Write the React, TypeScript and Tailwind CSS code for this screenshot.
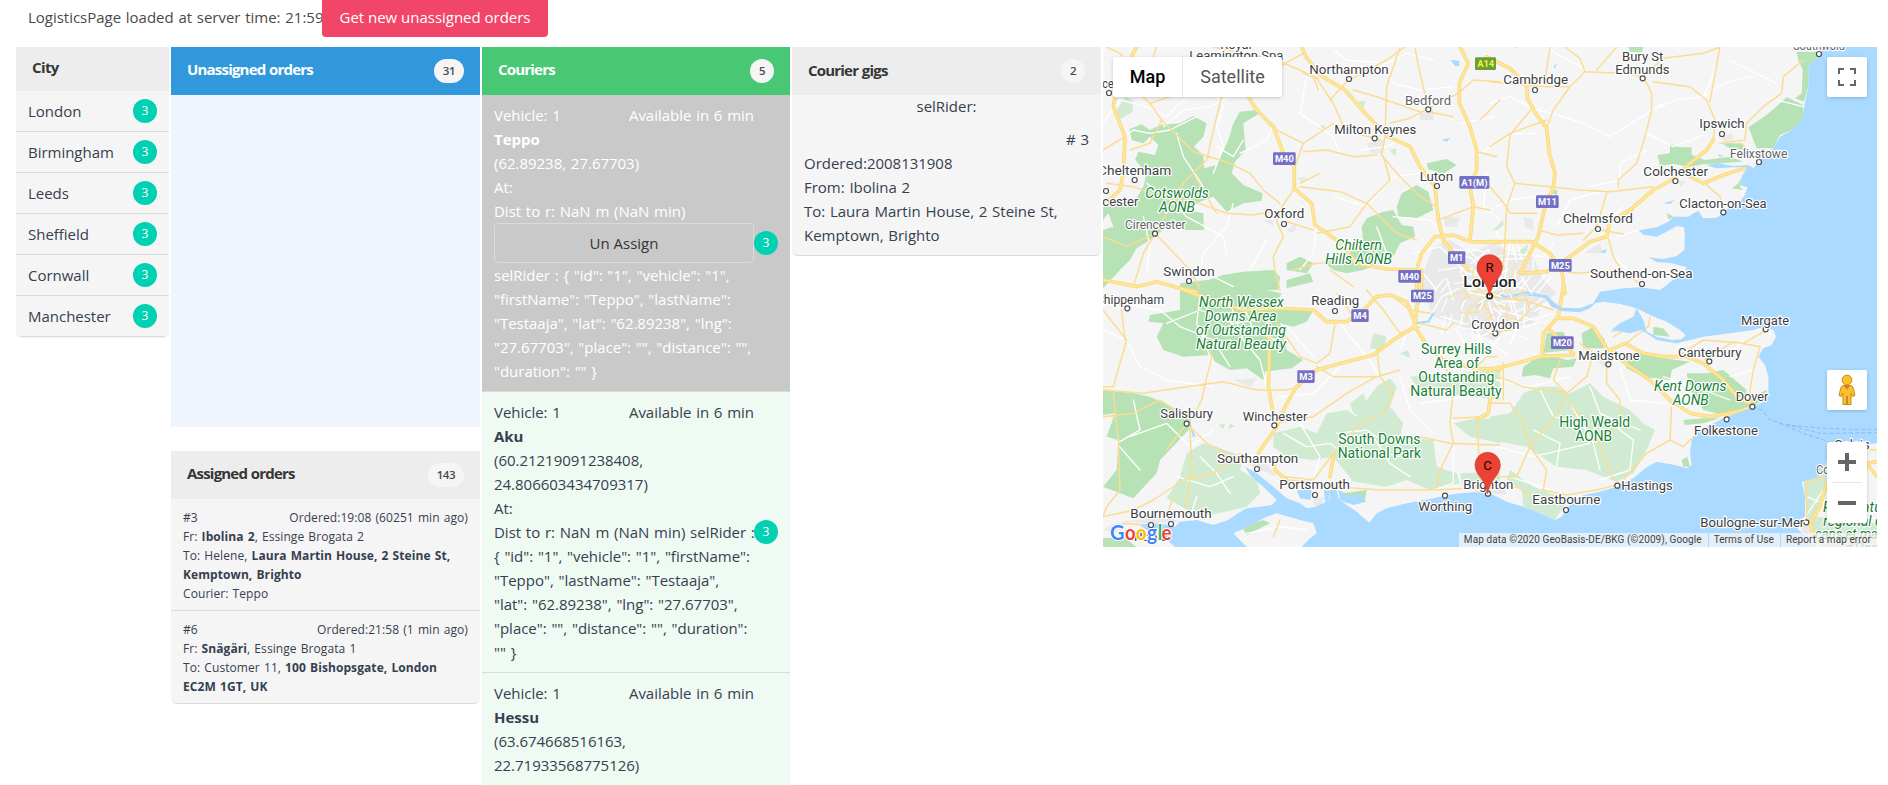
import type { ReactNode } from "react";

const sansClass = "font-['Open_Sans','Noto_Sans',sans-serif]";

/* ---------- Map data: four tiles, each path in its tile's own units ---------- */
type Tiles = [string, string, string, string];
const tileOffsets = ["translate(0 0)", "translate(1170 0)", "translate(0 750)", "translate(1170 750)"];

const darkGreen: Tiles = [
  "M280,228 L320,250 L310,290 L282,320 L310,345 L312,385 L350,375 L385,300 L400,250 L420,215 L470,210 L475,222 L430,250 L437,330 L405,365 L395,400 L430,435 L488,460 L485,482 L430,490 L380,515 L340,470 L300,485 L260,510 L310,520 L312,570 L235,570 L200,560 L150,600 L110,625 L90,660 L50,700 L9,740 L9,570 L40,560 L25,520 L9,540 L9,500 L100,490 L130,440 L140,400 L105,360 L115,335 L165,345 L175,315 L150,290 L130,310 L95,300 L88,268 L125,253 L150,270 L180,255 L240,250 Z M9,670 L60,640 L110,600 L60,690 L9,745 Z M980,370 L1040,357 L1070,375 L1030,402 L985,388 Z M925,450 L950,435 L985,455 L1000,510 L970,525 L950,535 L895,530 L890,500 L905,460 Z M850,515 L880,510 L905,555 L940,560 L945,590 L900,610 L880,650 L840,670 L790,690 L740,700 L700,690 L670,665 L735,655 L760,625 L790,610 L785,560 L800,535 Z M270,750 L310,725 L370,705 L430,695 L520,690 L540,710 L535,750 Z M560,670 L600,650 L640,670 L620,700 L560,690 Z M560,720 L630,700 L640,725 L560,745 Z",
  "M920,35 L985,35 L985,50 L960,75 L955,140 L942,185 L915,175 L935,160 L938,90 L925,60 Z M890,172 L940,195 L940,240 L905,270 L870,285 L850,325 L800,325 L775,262 L830,225 Z M540,312 L570,322 L605,322 L605,345 L645,360 L720,350 L760,365 L640,373 L600,380 L550,372 L510,378 L503,345 L540,340 Z M695,310 L755,310 L765,330 L720,325 Z M760,405 L750,440 L760,450 L725,445 L745,430 Z M415,21 L460,21 L455,38 L420,35 Z M530,520 L552,530 L535,538 Z M190,450 L203,450 L200,465 L190,462 Z",
  "M240,-20 L320,-30 L420,-10 L500,0 L545,10 L530,40 L555,60 L640,60 L620,95 L580,110 L540,100 L560,180 L610,210 L575,235 L495,245 L490,270 L440,235 L390,240 L345,215 L335,195 L250,200 L190,180 L170,140 L190,100 L145,95 L150,75 L240,60 Z M9,300 L100,310 L150,320 L195,340 L270,380 L275,410 L200,490 L180,510 L170,550 L100,625 L60,610 L9,590 L50,540 L55,450 L20,440 L45,370 L9,375 Z M730,610 L800,600 L795,630 L740,640 Z M425,710 L490,690 L510,700 L440,735 Z M9,745 L70,740 L110,771 L9,771 Z",
  "M275,130 L310,110 L345,150 L340,175 L280,175 Z M160,190 L230,210 L260,205 L250,230 L190,235 L180,265 L135,255 L95,260 L100,230 Z M400,205 L440,185 L520,205 L600,215 L545,240 L540,270 L460,260 L410,235 Z M590,250 L650,250 L700,240 L770,300 L765,330 L830,300 L833,320 L760,370 L700,375 L640,360 L600,300 Z M580,390 L640,385 L690,385 L640,400 L585,405 Z M490,110 L520,115 L540,140 L490,135 Z M575,510 L592,500 L600,530 L580,530 Z M170,130 L220,125 L245,180 L160,188 Z",
];
const lightGreen: Tiles = [
  "M50,210 L75,170 L98,180 L98,215 L60,238 Z M650,260 L675,255 L670,275 Z M870,330 L890,325 L885,350 Z M775,185 L795,182 L792,205 Z",
  "M10,570 L40,540 L40,555 L15,575 Z M80,640 L115,612 L110,635 L85,655 Z",
  "M520,430 L600,410 L650,430 L680,370 L740,360 L770,380 L800,330 L830,290 L870,265 L890,290 L870,350 L910,400 L900,440 L1000,450 L1010,530 L1070,550 L1080,580 L990,600 L920,570 L860,590 L760,575 L700,500 L640,510 L560,500 L520,470 Z M310,460 L350,470 L430,500 L420,540 L470,570 L480,610 L440,650 L400,660 L330,675 L280,670 L200,625 L240,560 L260,490 Z M750,340 L790,310 L800,340 L780,380 L760,370 Z M930,260 L1200,240 L1200,330 L960,300 Z M1060,400 L1130,385 L1200,390 L1200,460 L1110,440 Z M1080,550 L1200,545 L1200,600 L1090,590 Z M820,130 L860,140 L850,180 L810,175 Z M720,600 L760,620 L730,640 Z M900,190 L925,180 L930,205 Z M355,405 L375,400 L370,418 Z M390,400 L405,408 L385,418 Z",
  "M0,380 L60,370 L100,310 L150,290 L200,290 L240,310 L300,280 L340,320 L420,360 L460,400 L495,420 L470,480 L430,550 L380,575 L290,540 L200,530 L110,470 L0,450 Z M60,540 L130,590 L180,610 L230,620 L220,650 L195,690 L100,650 L95,600 L50,570 Z M940,575 L1010,510 L1010,600 L980,680 L1161,700 L1161,771 L990,771 L960,730 L945,620 Z",
];
const whiteRoads: Tiles = [
  "M9,330 L60,300 L100,270 L150,280 L210,270 L290,230 M300,30 L320,120 L370,200 L350,260 L370,320 L340,400 M190,260 L250,210 L330,200 L390,170 M9,250 L60,180 L140,200 L200,230 L260,170 M140,430 L210,480 L260,530 L370,590 L380,640 M420,340 L500,300 L520,260 M700,30 L740,60 L860,70 L920,40 L1000,60 M850,70 L880,130 L960,150 L1060,140 M620,110 L600,220 L700,290 L720,340 M700,470 L800,500 L880,410 L960,400 M780,330 L860,320 L900,300 M650,560 L640,640 L600,690 M880,530 L990,540 L1010,560 M1080,250 L1180,230 M1130,350 L1200,300 M400,490 L380,560 L310,640 L300,700 M130,530 L150,620 L140,700 M500,600 L450,690 M1160,400 L1150,500 L1200,540 M940,640 L1020,620 L1100,700 L1200,720 M970,700 L1010,750 M350,320 L400,350 L430,300 M230,280 L250,350 L310,440 M830,560 L860,640 L820,680 M340,710 L400,740",
  "M180,30 L290,90 M0,190 L60,170 L140,210 L190,220 L280,250 L360,290 L440,240 L520,190 M60,280 L140,280 M485,210 L560,180 L640,170 L700,130 L780,110 M470,280 L550,320 L640,285 M300,440 L390,420 L390,370 L470,330 M200,560 L240,480 L350,450 M400,500 L350,550 M720,60 L860,130 M680,80 L640,170 M860,180 L940,200 M0,510 L60,480 L140,470 M50,640 L160,650 L190,610 M60,600 L40,750 M380,590 L450,570 L550,560 M380,660 L430,700",
  "M9,120 L80,150 L120,230 L200,270 L340,290 M60,40 L180,60 L240,110 L340,150 L390,230 M300,20 L290,100 L330,200 L320,280 M390,40 L430,150 L480,210 L500,290 M560,110 L640,200 M720,100 L800,200 L840,260 M90,440 L200,400 L270,470 L340,420 M540,320 L640,310 L720,230 M550,430 L620,470 L690,460 L740,500 L820,480 L900,500 M600,400 L660,500 L640,570 M820,440 L870,520 L930,560 M900,260 L930,360 L1000,430 M960,340 L1040,330 L1150,310 M1060,470 L1060,580 L1000,600 M230,560 L330,590 L400,560 M290,620 L270,680 M1110,80 L1150,160 M900,180 L920,130 M440,730 L540,710 L620,720 M200,100 L300,60 L400,100 L470,90 M420,20 L460,120 L550,160 M100,330 L120,420 L50,460 L120,540 M300,500 L350,550 L390,610 M710,430 L800,420 L860,460",
  "M30,60 L130,90 L190,70 M60,10 L90,100 L60,160 M20,270 L120,290 L240,260 M240,340 L310,460 L330,540 M130,420 L210,460 L200,530 M20,470 L130,500 L300,460 M390,230 L420,330 L530,340 M350,390 L430,450 L420,540 M520,260 L640,300 L720,330 M620,210 L620,160 L560,170 M700,210 L760,150 M720,260 L790,240 M420,540 L330,570 M60,560 L180,600 M950,620 L1000,640 M940,690 L1000,600 L1060,560 M150,300 L190,380 L270,400 M300,290 L330,370 L450,420",
];
const minorRoads: Tiles = [
  "M20,21 L60,40 L100,90 L150,75 L170,21 M60,110 L150,190 L185,240 L280,335 L390,370 L450,400 L490,450 L540,490 M9,140 L50,120 M150,190 L210,170 L205,110 M185,240 L150,310 L90,330 M365,170 L345,250 L320,360 L250,430 L210,500 L165,580 M9,330 L75,290 M20,430 L100,440 L210,480 L270,480 L380,520 L460,525 L540,510 M165,580 L270,690 L300,745 M165,580 L130,640 L100,740 M9,590 L80,620 L165,580 M285,410 L350,520 M610,40 L520,90 L470,150 L440,170 M610,100 L650,115 L700,190 L735,270 L840,300 M690,180 L740,125 L860,60 L915,21 M655,115 L530,60 L340,21 M640,110 L655,150 M520,265 L610,310 L700,250 M610,310 L585,380 M610,335 L680,330 L760,350 L830,345 M760,150 L830,170 L960,215 M945,25 L960,100 L985,205 L930,235 L870,250 M900,21 L860,140 L855,290 L845,345 L890,400 L960,470 L1010,500 M985,215 L1060,230 M985,205 L1075,160 L1120,120 L1200,125 M600,440 L720,455 L800,490 L890,580 L950,600 M800,490 L750,560 L650,580 M850,350 L870,420 L800,490 M583,445 L540,510 L530,545 L550,590 L520,650 L525,690 L540,750 M560,545 L640,570 M660,400 L600,430 M1130,335 L1190,350 M1140,240 L1200,180 M1015,540 L1120,500 L1170,510 M580,690 L650,670 L770,665 M690,690 L760,740 M400,21 L380,60",
  "M0,5 L80,21 M0,60 L50,80 M0,125 L90,135 L180,140 L240,140 L285,95 L400,100 L460,110 M285,95 L270,55 L225,21 M180,21 L165,120 M320,90 L380,21 M460,110 L520,55 L640,40 L690,21 M460,110 L485,160 L485,210 L465,290 L440,370 L385,420 L385,440 M490,125 L600,140 L650,180 L675,240 L670,300 M690,21 L660,185 M940,60 L880,110 L875,160 L820,200 L770,250 L765,300 L690,310 M60,285 L50,380 L75,430 L180,440 L270,450 L360,455 L490,440 M60,285 L130,200 M0,320 L60,280 L170,240 M75,430 L50,500 L45,600 L40,680 M0,440 L50,500 L60,520 L140,520 M350,460 L320,560 L280,600 M145,570 L200,585 L280,580 M330,570 L400,582 M355,595 L370,650 L400,700 L450,730 M200,690 L260,700 L380,690 M240,140 L190,210 L170,265 M645,430 L690,470 L700,510 M360,550 L430,510 M755,310 L780,340",
  "M9,60 L80,150 L40,290 L9,290 M60,20 L75,150 M9,300 L130,310 L260,290 L370,275 L470,300 L560,300 L600,290 M320,150 L335,200 L305,330 L290,360 L260,400 M9,380 L100,370 L180,330 L240,370 M40,310 L55,450 L60,600 L20,650 L9,680 M260,400 L320,460 L360,480 L430,520 M260,400 L200,480 M270,410 L275,550 L255,650 M420,490 L340,550 L250,570 L160,630 L100,660 L9,680 M530,100 L600,200 L650,220 L690,190 L705,100 M650,230 L700,260 L830,260 L900,240 M830,260 L740,310 L640,380 L530,400 M830,170 L840,260 L880,310 L850,370 L780,400 L700,490 M700,490 L640,570 L560,560 M560,570 L640,575 L710,590 L840,600 L1010,600 L1170,590 M1010,600 L1020,540 L1060,460 L1050,400 L1060,300 L1030,210 M1060,385 L1160,380 M960,440 L1050,460 L1200,465 M1130,390 L1135,470 L1140,540 M710,10 L760,80 M800,0 L850,60 L900,130 L960,110 M960,100 L1040,120 L1060,100 M880,20 L930,60 L990,70 M70,700 L200,710 M220,620 L200,680 M540,690 L520,740 M1120,240 L1160,200 L1190,200",
  "M0,20 L100,30 L190,60 M100,0 L120,60 L60,120 L0,130 M0,340 L60,340 L100,400 L120,470 L80,560 L10,560 M40,220 L40,330 M230,310 L290,260 L310,190 L270,160 M120,470 L200,370 L230,310 L190,270 L210,210 M120,470 L170,540 L160,600 L230,615 L320,600 L400,580 M240,340 L320,440 L370,570 M350,230 L350,280 L390,330 L390,380 L360,440 M545,340 L540,450 L470,490 L400,570 M540,450 L580,470 L610,440 L700,385 M810,170 L790,240 L780,300 L785,345 M560,200 L640,150 L760,160 L830,120 M645,210 L730,155 L810,170 M480,80 L475,110 L420,150 L405,165 M370,140 L440,100 M0,250 L100,290 L230,310 M1161,480 L1100,475 M1000,560 L950,575 L950,690 M80,590 L110,610 L230,640 M0,595 L80,590",
];
const highways: Tiles = [
  "M605,21 L618,50 L660,105 L735,150 L800,225 L865,290 L930,320 L960,380 L1005,440 L1015,540 L1030,600 L1070,650 L1105,690 M445,170 L470,210 L520,260 L550,340 L583,380 L583,445 L635,490 L645,555 L710,600 L770,670 L860,687 L950,690 M1080,21 L1105,70 L1078,130 L1078,190 L1110,260 L1130,330 L1130,390 L1110,440 L1120,500 L1110,600 M950,760 L950,690 L965,640 L1005,590 L1060,585 L1110,605 L1200,607 M110,21 L80,75 L50,140 L40,200 L75,290 L70,400 L60,450 L15,490 M9,720 L110,740 L170,725 L240,745 L290,755",
  "M-10,50 L60,85 L110,135 L112,175 L140,225 L170,265 L178,340 L195,400 L190,440 L165,500 L145,590 L100,680 L90,700 M0,605 L125,605 L180,640 L215,690 L225,760 M90,700 L170,695 L240,650 L300,605 L350,590 L360,545 L420,510 L490,450 L545,420 L600,370 L650,330 L670,300 M600,410 L640,430 L700,405 L765,385",
  "M240,-5 L330,30 L430,60 L530,55 L640,60 L680,95 L740,95 L790,60 L830,20 L870,15 L920,35 L945,100 M945,110 L880,150 L820,195 L740,215 L650,240 L590,290 L555,350 L530,410 L475,490 M965,-60 L965,0 L950,50 L945,110 L980,165 L1030,210 L1120,235 L1200,238 M505,80 L508,200 L505,290 L525,400 M1170,240 L1175,290 L1165,370 L1135,385 M520,500 L525,540 L560,570 M700,500 L690,560",
  "M0,238 L60,225 L150,200 L250,195 M220,-10 L205,80 L160,130 L155,200 M205,85 L250,85 L310,110 L350,175 L420,230 L480,270 L540,330 L600,370 L660,380 L740,365 L790,350 M360,180 L405,160 L460,190 L520,200 L590,200 L640,220 L700,270 L740,320 L790,345 M180,120 L250,190 M1161,515 L1130,520 L1161,560 M1010,580 L990,650 L960,700 L970,730",
];
const landPaths = [
  // Mainland
  "M9,21 L2155,21 L2155,45 L2125,80 L2125,140 L2115,190 L2105,240 L2075,270 L2040,290 L2020,325 L1980,360 L1960,385 L1945,375 L1900,378 L1850,368 L1820,376 L1850,385 L1900,382 L1942,382 L1925,410 L1920,435 L1942,442 L1935,465 L1915,490 L1890,500 L1870,520 L1850,533 L1810,535 L1795,512 L1780,520 L1765,530 L1720,530 L1705,545 L1670,562 L1615,570 L1630,584 L1670,590 L1710,570 L1730,558 L1752,562 L1755,590 L1753,630 L1730,648 L1690,657 L1645,652 L1670,666 L1715,670 L1760,682 L1755,695 L1730,710 L1700,735 L1680,750 L1620,742 L1570,745 L1500,755 L1480,790 L1440,805 L1385,803 L1360,785 L1340,765 L1310,762 L1250,765 L1310,770 L1335,775 L1355,800 L1385,813 L1440,817 L1470,805 L1485,790 L1510,785 L1560,792 L1610,805 L1600,830 L1560,850 L1535,870 L1590,880 L1625,870 L1640,880 L1670,900 L1730,910 L1810,890 L1890,880 L1960,870 L1990,860 L2020,870 L2028,890 L2015,915 L1990,925 L1975,950 L1995,975 L2005,1010 L2005,1060 L1990,1085 L1960,1100 L1920,1115 L1880,1130 L1830,1155 L1790,1175 L1775,1200 L1770,1240 L1775,1275 L1760,1285 L1725,1275 L1670,1265 L1635,1285 L1600,1315 L1550,1340 L1500,1355 L1450,1365 L1425,1385 L1405,1400 L1385,1430 L1365,1440 L1320,1420 L1270,1400 L1220,1385 L1165,1357 L1120,1357 L1060,1362 L1000,1375 L920,1390 L860,1405 L830,1420 L808,1448 L770,1415 L740,1395 L715,1375 L710,1350 L690,1350 L688,1380 L670,1390 L640,1402 L620,1405 L600,1390 L560,1375 L520,1340 L470,1300 L435,1280 L450,1305 L500,1350 L530,1380 L515,1395 L480,1400 L440,1405 L410,1422 L385,1440 L340,1455 L290,1440 L240,1445 L225,1460 L190,1452 L150,1450 L120,1455 L140,1470 L190,1490 L225,1521 L9,1521 Z",
  // Sheppey
  "M1610,805 L1650,825 L1700,845 L1740,870 L1757,885 L1745,898 L1715,900 L1670,890 L1640,875 L1630,840 Z",
  // Isle of Wight
  "M400,1480 L440,1462 L500,1430 L530,1420 L600,1440 L640,1450 L650,1480 L630,1495 L605,1521 L440,1521 Z",
  // France
  "M2331,1210 L2250,1220 L2185,1250 L2170,1290 L2150,1315 L2105,1325 L2115,1370 L2115,1430 L2090,1450 L2095,1470 L2120,1490 L2150,1521 L2331,1521 Z",
];
const urban =
  "M1000,620 L1050,600 L1110,640 L1180,610 L1240,640 L1300,650 L1330,720 L1370,760 L1330,790 L1300,850 L1240,860 L1180,900 L1120,880 L1060,850 L1000,830 L980,780 L940,760 L970,700 Z M1030,530 L1080,530 L1070,560 L1035,560 Z M800,310 L850,300 L850,340 L810,340 Z M960,220 L1000,210 L1000,240 L960,240 Z M1270,530 L1300,540 L1300,570 L1275,560 Z M590,415 L620,410 L610,430 Z M490,540 L520,540 L520,560 Z M560,570 L585,550 L590,570 L570,580 Z M1730,420 L1760,425 L1740,440 Z M1865,290 L1895,280 L1900,300 L1870,305 Z M440,1270 L500,1270 L530,1310 L480,1290 Z M640,1375 L670,1370 L665,1395 L640,1395 Z M1110,1340 L1210,1340 L1220,1365 L1120,1355 Z M60,1445 L200,1430 L240,1445 L150,1450 Z M1490,960 L1530,950 L1540,970 L1510,980 Z M400,1020 L470,1015 L450,1040 Z M10,1470 L40,1450 L80,1450 L60,1475 Z M2095,1450 L2130,1440 L2140,1490 L2110,1480 Z M1450,640 L1500,610 L1510,640 Z";
const lakes =
  "M1052,60 L1078,62 L1078,78 L1065,78 Z M1025,300 L1050,293 L1040,305 Z M1855,342 L1870,348 L1858,350 Z M1690,490 L1725,480 L1710,492 Z M1500,635 L1522,627 L1515,640 Z M1360,80 L1372,68 L1365,85 Z M355,435 L365,442 L358,445 Z M1530,875 L1590,845 L1620,850 L1610,875 L1570,872 Z M590,1350 L635,1350 L632,1380 L600,1375 Z M672,1350 L690,1352 L685,1385 L675,1385 Z M715,1350 L745,1370 L770,1360 L800,1385 L760,1395 L720,1380 Z M270,1155 L288,1190 L278,1190 Z";
const thames = "M1130,800 L1150,785 L1170,770 L1200,762 L1215,772 L1250,765 L1280,758 L1320,765 M945,850 L985,845 L1000,820";

const londonStreets = (() => {
  const yellow: string[] = [];
  const white: string[] = [];
  for (let i = 0; i < 110; i++) {
    const angle = (i * 137.5 * Math.PI) / 180;
    const near = 8 + (i % 9) * 17;
    const far = near + 18 + (i % 5) * 8;
    const bend = angle + (i % 3 === 0 ? 0.5 : -0.25);
    const segment = `M${(1168 + near * Math.cos(angle)).toFixed(0)},${(765 + near * Math.sin(angle)).toFixed(0)} L${(1168 + far * Math.cos(bend)).toFixed(0)},${(765 + far * Math.sin(bend)).toFixed(0)}`;
    (i % 9 < 5 && i % 2 === 0 ? yellow : white).push(segment);
  }
  return { yellow: yellow.join(" "), white: white.join(" ") };
})();

type Tone = "city" | "town" | "park" | "parkItalic" | "capital";
// [text, x centre, baseline, width, tone]
const labels: [string, number, number, number, Tone][] = [
  ["Royal", 408, 26, 94, "city"],
  ["Leamington Spa", 409, 60, 282, "city"],
  ["Northampton", 747, 102, 238, "city"],
  ["Bedford", 984, 194, 138, "town"],
  ["Milton Keynes", 826, 281, 246, "city"],
  ["Luton", 1009, 423, 100, "city"],
  ["Cheltenham", 104, 404, 220, "city"],
  ["ce", 24, 144, 34, "city"],
  ["cester", 61, 498, 108, "city"],
  ["Cirencester", 166, 567, 182, "town"],
  ["Oxford", 553, 534, 120, "city"],
  ["Swindon", 267, 708, 154, "city"],
  ["Cotswolds", 231, 474, 190, "parkItalic"],
  ["AONB", 231, 516, 108, "parkItalic"],
  ["Chiltern", 776, 629, 140, "parkItalic"],
  ["Hills AONB", 776, 671, 200, "parkItalic"],
  ["Cambridge", 1307, 132, 194, "city"],
  ["Bury St", 1628, 62, 124, "city"],
  ["Edmunds", 1627, 102, 162, "city"],
  ["Southwold", 2157, 30, 156, "town"],
  ["Ipswich", 1866, 264, 136, "city"],
  ["Felixstowe", 1976, 353, 172, "town"],
  ["Colchester", 1727, 408, 194, "city"],
  ["Clacton-on-Sea", 1869, 503, 262, "city"],
  ["Chelmsford", 1494, 549, 210, "city"],
  ["Southend-on-Sea", 1624, 714, 308, "city"],
  ["London", 1170, 742, 160, "capital"],
  ["Chippenham", 90, 792, 204, "city"],
  ["Reading", 706, 795, 144, "city"],
  ["Croydon", 1186, 866, 144, "city"],
  ["North Wessex", 424, 801, 254, "parkItalic"],
  ["Downs Area", 422, 843, 216, "parkItalic"],
  ["of Outstanding", 423, 885, 270, "parkItalic"],
  ["Natural Beauty", 423, 927, 270, "parkItalic"],
  ["Surrey Hills", 1069, 942, 212, "park"],
  ["Area of", 1070, 984, 134, "park"],
  ["Outstanding", 1069, 1026, 228, "park"],
  ["Natural Beauty", 1068, 1068, 274, "park"],
  ["Salisbury", 260, 1134, 158, "city"],
  ["Winchester", 525, 1142, 194, "city"],
  ["Southampton", 473, 1269, 244, "city"],
  ["Portsmouth", 644, 1347, 212, "city"],
  ["Worthing", 1036, 1413, 162, "city"],
  ["Brighton", 1165, 1347, 150, "city"],
  ["Bournemouth", 213, 1433, 244, "city"],
  ["Poole", 152, 1502, 100, "city"],
  ["South Downs", 838, 1212, 246, "park"],
  ["National Park", 838, 1254, 250, "park"],
  ["Margate", 1995, 854, 144, "city"],
  ["Canterbury", 1829, 951, 190, "city"],
  ["Maidstone", 1527, 959, 184, "city"],
  ["Kent Downs", 1771, 1053, 218, "parkItalic"],
  ["AONB", 1772, 1095, 108, "parkItalic"],
  ["Dover", 1956, 1083, 98, "city"],
  ["Folkestone", 1878, 1184, 192, "city"],
  ["High Weald", 1484, 1161, 212, "park"],
  ["AONB", 1481, 1203, 110, "park"],
  ["Hastings", 1641, 1350, 154, "city"],
  ["Eastbourne", 1399, 1392, 204, "city"],
  ["Boulogne-sur-Mer", 1957, 1461, 312, "city"],
  ["Calais", 2256, 1228, 106, "city"],
  ["Coquelles", 2220, 1301, 142, "town"],
  ["Parc naturel", 2280, 1416, 222, "parkItalic"],
  ["régional des", 2280, 1458, 220, "parkItalic"],
  ["caps et marais", 2270, 1496, 250, "parkItalic"],
  ["d'Opale", 2300, 1538, 130, "parkItalic"],
];
const toneClass: Record<Tone, string> = {
  city: "fill-[#3c4043] text-[41px]",
  town: "fill-[#5f6368] text-[37px]",
  park: "fill-[#188038] text-[42px]",
  parkItalic: "fill-[#188038] text-[42px] italic",
  capital: "fill-[#202124] text-[43px] font-medium",
};
const towns: [number, number][] = [
  [747, 117], [985, 208], [824, 295], [1011, 438], [104, 420], [18, 453], [27, 159], [165, 581], [552, 552], [267, 723],
  [1305, 150], [1628, 115], [2157, 42], [1866, 282], [1977, 366], [1726, 423], [1870, 517], [1494, 567], [1626, 732],
  [82, 805], [705, 813], [1186, 880], [260, 1151], [523, 1156], [471, 1287], [645, 1365], [1035, 1367], [1164, 1361],
  [153, 1455], [213, 1452], [1997, 868], [1828, 964], [1525, 973], [1957, 1100], [1880, 1138], [1552, 1337], [1398, 1410], [2119, 1447],
];
// [text, x centre, y centre, width]
const shields: [string, number, number, number][] = [
  ["M40", 553, 356, 68], ["A1(M)", 1123, 427, 90], ["M1", 1070, 653, 52], ["M40", 929, 709, 68], ["M25", 967, 768, 68],
  ["M4", 780, 827, 52], ["M3", 618, 1010, 52], ["M11", 1342, 485, 68], ["M25", 1381, 676, 68], ["M20", 1387, 908, 68],
];

function Layer({ tiles, className }: { tiles: Tiles; className: string }) {
  return (
    <g className={className}>
      {tiles.map((d, i) => (
        <path key={i} d={d} transform={tileOffsets[i]} />
      ))}
    </g>
  );
}

function Marker({ x, y, letter }: { x: number; y: number; letter: string }) {
  return (
    <g transform={`translate(${x} ${y})`}>
      <path
        d="M0,0 C-3,-16 -8,-30 -20,-46 C-31,-60 -38,-72 -38,-86 A38,38 0 0 1 38,-86 C38,-72 31,-60 20,-46 C8,-30 3,-16 0,0 Z"
        fill="#ea4335"
        stroke="#d33b2e"
        strokeWidth="2"
      />
      <text y="-71" textAnchor="middle" className="fill-[#1a0000] text-[40px]">
        {letter}
      </text>
    </g>
  );
}

function MapCanvas() {
  return (
    <svg viewBox="9 21 2322 1500" width="774" height="500" className="block bg-[#aadaff] font-[Roboto,sans-serif] tracking-normal [word-spacing:0]">
      <defs>
        <clipPath id="land">
          {landPaths.map((d, i) => (
            <path key={i} d={d} />
          ))}
        </clipPath>
      </defs>
      {landPaths.map((d, i) => (
        <path key={i} d={d} fill="#f5f5f5" />
      ))}
      <g clipPath="url(#land)" strokeLinejoin="round" strokeLinecap="round">
        <Layer tiles={lightGreen} className="fill-[#d0ebd1]" />
        <Layer tiles={darkGreen} className="fill-[#b7e2b6]" />
        <path d={urban} fill="#e9e9e9" />
        <path d={lakes} fill="#aadaff" />
        <path d={thames} className="fill-none stroke-[#aadaff] stroke-[7px]" />
        <Layer tiles={whiteRoads} className="fill-none stroke-white stroke-[4px]" />
        <path d={londonStreets.white} className="fill-none stroke-white stroke-[4px]" />
        <path d={londonStreets.yellow} className="fill-none stroke-[#fde09a] stroke-[3.5px]" />
        <Layer tiles={minorRoads} className="fill-none stroke-[#fbdc93] stroke-[4.5px]" />
        <Layer tiles={highways} className="fill-none stroke-[#f9d978] stroke-[11px]" />
        <Layer tiles={highways} className="fill-none stroke-[#ffe69a] stroke-[6px]" />
      </g>
      <path
        d="M1960,1100 L1985,1110 L2010,1140 L2060,1155 L2150,1163 L2240,1168 L2331,1168 M2040,1150 L2110,1180 L2200,1210 M2060,1153 L2160,1180 L2331,1178"
        className="fill-none stroke-[#8fb8ee] stroke-[3px] [stroke-dasharray:12_7]"
      />
      <g strokeLinejoin="round">
        {towns.map(([x, y]) => (
          <circle key={`${x}-${y}`} cx={x} cy={y} r="7.5" fill="#fff" stroke="#4a4d51" strokeWidth="3.6" />
        ))}
        <circle cx="1169" cy="768" r="8" fill="#fff" stroke="#202124" strokeWidth="5" />
        {labels.map(([text, x, y, width, tone]) => (
          <text
            key={`${text}-${y}`}
            x={x}
            y={y}
            textAnchor="middle"
            textLength={width}
            lengthAdjust="spacingAndGlyphs"
            className={`${toneClass[tone]} stroke-white stroke-[7px] [paint-order:stroke]`}
          >
            {text}
          </text>
        ))}
      </g>
      {shields.map(([text, x, y, width]) => (
        <g key={`${text}-${x}`}>
          <rect x={x - width / 2} y={y - 19} width={width} height="38" rx="4" fill="#7370c6" />
          <text x={x} y={y + 10} textAnchor="middle" className="fill-white text-[28px] font-bold">
            {text}
          </text>
        </g>
      ))}
      <rect x="1125" y="52" width="63" height="38" rx="4" fill="#689f38" />
      <text x="1157" y="81" textAnchor="middle" className="fill-[#ffee3b] text-[28px] font-bold">
        A14
      </text>
      <Marker x={1169} y={768} letter="R" />
      <Marker x={1163} y={1361} letter="C" />
    </svg>
  );
}

function GoogleLogo() {
  const letters: [string, string, number, number][] = [
    ["G", "#4285f4", 0, 14.5], ["o", "#ea4335", 15, 10.5], ["o", "#fbbc04", 26, 10.5],
    ["g", "#4285f4", 37, 10], ["l", "#34a853", 48, 4], ["e", "#ea4335", 51.5, 10],
  ];
  return (
    <svg width="66" height="26" viewBox="0 0 66 26" className="block font-[Lato,sans-serif] text-[20px] font-bold">
      {letters.map(([ch, color, x, width], i) => (
        <text
          key={i}
          x={x + 1}
          y="18"
          textLength={width}
          lengthAdjust="spacingAndGlyphs"
          fill={color}
          stroke="#fff"
          strokeWidth="2"
          className="[paint-order:stroke]"
        >
          {ch}
        </text>
      ))}
    </svg>
  );
}

const control = "absolute bg-white rounded-[2px] shadow-[0_1px_4px_-1px_rgba(0,0,0,0.3)]";

function MapPanel() {
  return (
    <section className="relative h-[500px] w-[774px] shrink-0 overflow-hidden font-[Roboto,sans-serif] tracking-normal [word-spacing:0]">
      <MapCanvas />
      <div className={`${control} left-[10px] top-[10px] flex h-10 text-[18px] leading-10`}>
        <button className="w-[70px] border-r border-[#e6e6e6] text-center font-medium text-black">Map</button>
        <button className="w-[99px] text-center text-[#565656]">Satellite</button>
      </div>
      <button className={`${control} right-[10px] top-[10px] flex size-10 items-center justify-center`}>
        <svg width="18" height="18" viewBox="0 0 18 18" className="fill-[#666]">
          <path d="M0,0v6h2V2h4V0H0zM16,0h-4v2h4v4h2V0H16zM16,16h-4v2h6v-6h-2V16zM2,12H0v6h6v-2H2V12z" />
        </svg>
      </button>
      <button className={`${control} right-[10px] top-[323px] flex size-10 items-center justify-center`}>
        <svg width="18" height="32" viewBox="0 0 18 32">
          <path
            d="M5,11.5 L13,11.5 Q15,12 15.5,15 L17,21.5 L14.5,22.5 L13,19 L13,30.5 L5,30.5 L5,19 L3.5,22.5 L1,21.5 L2.5,15 Q3,12 5,11.5 Z"
            fill="#fbc02d"
            stroke="#c58f1d"
            strokeWidth="1"
          />
          <path d="M5.5,11.5 L12.5,11.5 L9,15.5 Z" fill="#e0792a" />
          <path d="M9,22 V30.5" stroke="#a9791b" strokeWidth="1.4" />
          <circle cx="9" cy="6" r="4.9" fill="#fbc02d" stroke="#c58f1d" />
        </svg>
      </button>
      <div className={`${control} right-[10px] top-[395px] flex h-[81px] w-10 flex-col items-center`}>
        <button className="flex h-10 w-10 items-center justify-center">
          <svg width="18" height="18" viewBox="0 0 18 18" className="fill-[#666]">
            <path d="M7,0h4v7h7v4h-7v7H7v-7H0V7h7z" />
          </svg>
        </button>
        <span className="h-px w-[30px] bg-[#e6e6e6]" />
        <button className="flex h-10 w-10 items-center justify-center">
          <svg width="18" height="18" viewBox="0 0 18 18" className="fill-[#666]">
            <path d="M0,7h18v4H0z" />
          </svg>
        </button>
      </div>
      <div className="absolute bottom-[-1px] left-[6px]">
        <GoogleLogo />
      </div>
      <div className="absolute bottom-0 right-0 flex h-[14px] whitespace-nowrap text-[10px] leading-[14px] tracking-[0.09px] text-[#444]">
        <span className="bg-[#f5f5f5]/75 pl-[5px] pr-[6px]">Map data ©2020 GeoBasis-DE/BKG (©2009), Google</span>
        <span className="ml-px bg-[#f5f5f5]/75 pl-[5px] pr-[6px]">Terms of Use</span>
        <span className="ml-px bg-[#f5f5f5]/75 pl-[5px] pr-[6px]">Report a map error</span>
      </div>
    </section>
  );
}

/* ---------- Panels ---------- */
function CountBadge({ value }: { value: number }) {
  return (
    <span className="flex size-6 shrink-0 items-center justify-center rounded-full bg-[#00d1b2] text-[12px] text-white">
      {value}
    </span>
  );
}

function PanelHeading({ title, count, color }: { title: string; count: number; color: string }) {
  return (
    <header
      className={`flex h-12 items-center justify-between px-4 text-[15px] font-bold tracking-[-0.8px] [word-spacing:0.5px] ${color}`}
    >
      <span className="-mt-[3px]">{title}</span>
      <span className="flex h-6 min-w-6 items-center justify-center rounded-full bg-[#f5f5f5] px-[9px] text-[11.5px] font-semibold tracking-[-0.5px] text-[#4a4a4a]">
        {count}
      </span>
    </header>
  );
}

const greyHeading = "bg-[#ededed] text-[#363636]";
const cities = ["London", "Birmingham", "Leeds", "Sheffield", "Cornwall", "Manchester"];

function Lines({ items }: { items: string[] }) {
  return (
    <>
      {items.map((line, i) => (
        <p key={i}>{line}</p>
      ))}
    </>
  );
}

function Courier({ name, lines, selected, children }: { name: string; lines: string[]; selected?: boolean; children?: ReactNode }) {
  return (
    <article
      className={`flex items-center border-b border-[#dbdbdb] px-3 py-2 ${selected ? "bg-[#c9c9c9] text-white" : "bg-[#effaf3] text-[#363f4f]"}`}
    >
      <div className="w-[260px] whitespace-nowrap leading-6">
        <div className="flex justify-between">
          <span>Vehicle: 1</span>
          <span>Available in 6 min</span>
        </div>
        <p className="font-bold">{name}</p>
        <Lines items={lines} />
        {children}
      </div>
      <CountBadge value={3} />
    </article>
  );
}

export default function App() {
  return (
    <main
      className={`h-[785px] overflow-hidden bg-white text-[15px] tracking-[-0.02px] text-[#363f4f] [word-spacing:0.9px] ${sansClass}`}
    >
      <div className="-mt-[3px] flex h-10 items-center pl-7">
        <span className="w-[294px] whitespace-nowrap text-[#4a4a4a]">LogisticsPage loaded at server time: 21:59</span>
        <button className="h-10 w-[226px] whitespace-nowrap rounded bg-[#f14668] text-white">Get new unassigned orders</button>
      </div>

      <div className="mt-[10px] flex items-start gap-[2px] pl-4">
        <section className="w-[153px] shrink-0 overflow-hidden rounded-b-md bg-[#f5f5f5] shadow-[0_1px_1px_rgba(0,0,0,0.06)]">
          <h2 className={`flex h-11 items-center px-4 pb-1 font-bold tracking-[-0.6px] ${greyHeading}`}>City</h2>
          {cities.map((city) => (
            <div key={city} className="flex h-[41px] items-center justify-between border-b border-[#dbdbdb] px-3">
              <span>{city}</span>
              <CountBadge value={3} />
            </div>
          ))}
        </section>

        <div className="w-[309px] shrink-0">
          <section className="h-[380px] bg-[#eef5fd]">
            <PanelHeading title="Unassigned orders" count={31} color="bg-[#3298dc] text-white" />
          </section>
          <section className="mt-6 overflow-hidden rounded-b-md bg-[#f5f5f5] text-[12px] leading-[19.1px] tracking-[0.08px]">
            <PanelHeading title="Assigned orders" count={143} color={greyHeading} />
            <article className="h-28 whitespace-nowrap border-b border-[#dbdbdb] px-3 pt-[9px]">
              <div className="flex justify-between">
                <span>#3</span>
                <span>Ordered:19:08 (60251 min ago)</span>
              </div>
              <p>Fr: <b>Ibolina 2</b>, Essinge Brogata 2</p>
              <p>To: Helene, <b>Laura Martin House, 2 Steine St,</b></p>
              <p><b>Kemptown, Brighto</b></p>
              <p>Courier: Teppo</p>
            </article>
            <article className="h-[93px] whitespace-nowrap rounded-b-md border-b border-[#dbdbdb] px-3 pt-[9px]">
              <div className="flex justify-between">
                <span>#6</span>
                <span>Ordered:21:58 (1 min ago)</span>
              </div>
              <p>Fr: <b>Snägäri</b>, Essinge Brogata 1</p>
              <p>To: Customer 11, <b>100 Bishopsgate, London</b></p>
              <p><b>EC2M 1GT, UK</b></p>
            </article>
          </section>
        </div>

        <section className="w-[308px] shrink-0">
          <PanelHeading title="Couriers" count={5} color="bg-[#48c774] text-white" />
          <Courier selected name="Teppo" lines={["(62.89238, 27.67703)", "At:", "Dist to r: NaN m (NaN min)"]}>
            <button className="block h-10 w-full rounded border border-[#dbdbdb] text-center text-[#363636]">Un Assign</button>
            <Lines
              items={[
                'selRider : { "id": "1", "vehicle": "1",',
                '"firstName": "Teppo", "lastName":',
                '"Testaaja", "lat": "62.89238", "lng":',
                '"27.67703", "place": "", "distance": "",',
                '"duration": "" }',
              ]}
            />
          </Courier>
          <Courier
            name="Aku"
            lines={[
              "(60.21219091238408,",
              "24.806603434709317)",
              "At:",
              "Dist to r: NaN m (NaN min) selRider :",
              '{ "id": "1", "vehicle": "1", "firstName":',
              '"Teppo", "lastName": "Testaaja",',
              '"lat": "62.89238", "lng": "27.67703",',
              '"place": "", "distance": "", "duration":',
              '"" }',
            ]}
          />
          <Courier
            name="Hessu"
            lines={[
              "(63.674668516163,",
              "22.71933568775126)",
              "At:",
              "Dist to r: NaN m (NaN min) selRider :",
              '{ "id": "1", "vehicle": "1", "firstName":',
              '"Teppo", "lastName": "Testaaja",',
              '"lat": "62.89238", "lng": "27.67703",',
              '"place": "", "distance": "", "duration":',
              '"" }',
            ]}
          />
        </section>

        <section className="w-[309px] shrink-0 overflow-hidden rounded-b-md border-b border-[#dbdbdb] bg-[#f5f5f5] leading-6">
          <PanelHeading title="Courier gigs" count={2} color={greyHeading} />
          <p className="-mt-px mb-px text-center">selRider:</p>
          <div className="whitespace-nowrap px-3 py-2">
            <p className="text-right"># 3</p>
            <p>Ordered:2008131908</p>
            <p>From: Ibolina 2</p>
            <p>To: Laura Martin House, 2 Steine St,</p>
            <p>Kemptown, Brighto</p>
          </div>
        </section>

        <MapPanel />
      </div>
    </main>
  );
}
